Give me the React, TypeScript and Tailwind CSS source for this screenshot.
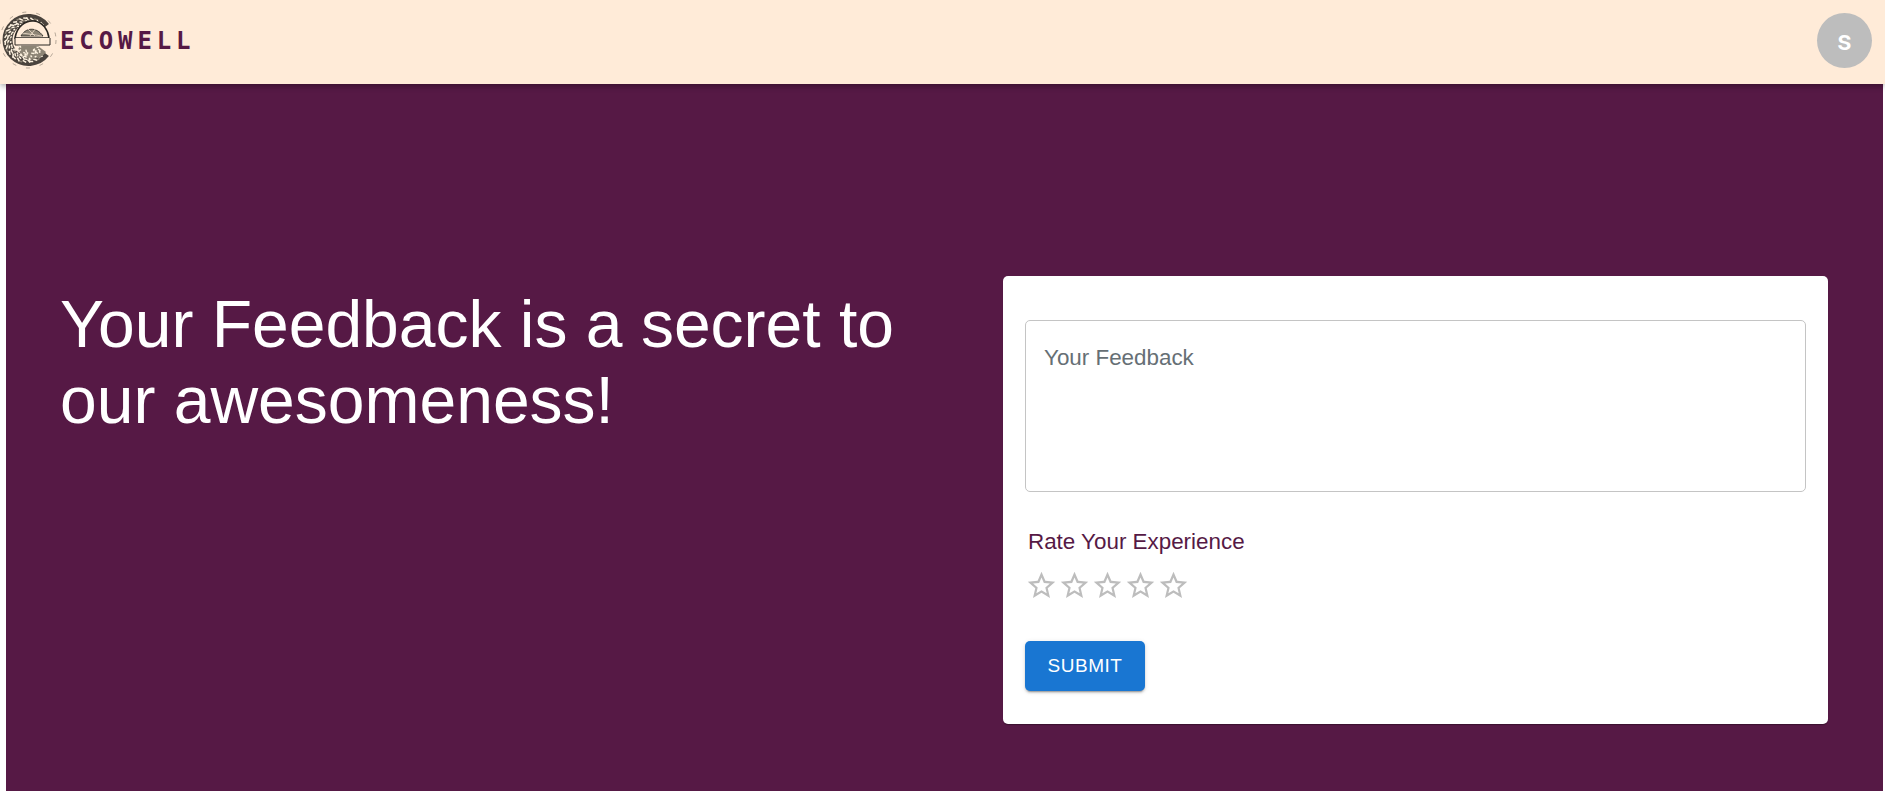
import React from 'react';

const sans = "font-['Liberation_Sans',Arial,sans-serif]";

const ink = '#2a2622';

// mosaic specks laid along the logo's strokes
const ringSpecks = Array.from({ length: 90 }, (_, i) => {
  const a = 0.7 + (i / 90) * (Math.PI * 2 - 1.4);
  const r = 17.5 + (i % 3) * 2.8;
  return { x: 27 + Math.cos(a) * r, y: 28 + Math.sin(a) * r, w: 2 + (i % 3), deg: (a * 180) / Math.PI + 90 + (i % 5) * 14 };
});

const bowlSpecks = Array.from({ length: 26 }, (_, i) => {
  const a = 0.3 + (i / 26) * 2.6;
  const r = 9 + (i % 3) * 2.5;
  return { x: 28 + Math.cos(a) * r, y: 32 + Math.sin(a) * r, w: 2 + (i % 2), deg: i * 41 };
});

function Logo() {
  return (
    <svg width="60" height="72" viewBox="0 0 60 72" className="shrink-0">
      <g transform="translate(0 7)">
        <circle cx="28" cy="28" r="28" fill="none" stroke="#6b6256" strokeWidth="0.5" strokeDasharray="4 10" />
        {/* outer ring, open on the right */}
        <path d="M45 41 A21 21 0 1 1 45 15" fill="none" stroke={ink} strokeWidth="10" opacity="0.85" />
        {ringSpecks.map((s, i) => (
          <rect key={i} x={s.x} y={s.y} width={s.w} height="1.5" fill={i % 5 === 0 ? '#8d8475' : '#fdf1df'} transform={`rotate(${s.deg} ${s.x} ${s.y})`} />
        ))}
        {/* inner e: dome on top, bar, mosaic bowl below */}
        <path d="M15 26 C17 14 26 8 34 9 C43 10 48 18 49 26 L15 26 Z" fill="#ffebd8" stroke={ink} strokeWidth="1.6" />
        <path d="M21 24 C25 16 36 14 43 24 Z" fill="#8d8475" stroke={ink} strokeWidth="0.8" />
        <path d="M22 21 L42 24 M28 17 L35 24 M36 16 L30 24" stroke="#ffebd8" strokeWidth="0.7" />
        <path d="M15 26 L15 33 L50 33 L50 26" fill="#ffebd8" stroke={ink} strokeWidth="1" />
        <path d="M18 34 C18 43 26 48 34 47 C40 46 44 43 46 40 L38 34 Z" fill="#8d8475" />
        {bowlSpecks.map((s, i) => (
          <rect key={i} x={s.x} y={s.y} width={s.w} height="1.4" fill="#fdf1df" transform={`rotate(${s.deg} ${s.x} ${s.y})`} />
        ))}
      </g>
    </svg>
  );
}

function StarOutline() {
  return (
    <svg width="33" height="33" viewBox="0 0 24 24" fill="#bdbdbd">
      <path d="M22 9.24l-7.19-.62L12 2 9.19 8.63 2 9.24l5.46 4.73L5.82 21 12 17.27 18.18 21l-1.63-7.03L22 9.24zM12 15.4l-3.76 2.27 1-4.28-3.32-2.88 4.38-.38L12 6.1l1.71 4.04 4.38.38-3.32 2.88 1 4.28L12 15.4z" />
    </svg>
  );
}

export default function App() {
  return (
    <div className={`min-h-[791px] bg-white ${sans}`}>
      <header className="relative z-10 flex h-[84px] items-center justify-between bg-[#ffebd8] pb-[3px] pr-[13px] shadow-[0_2px_4px_-1px_rgba(0,0,0,0.2),0_4px_5px_0_rgba(0,0,0,0.14)]">
        <div className="flex items-center">
          <Logo />
          <span className="font-['DejaVu_Sans_Mono',monospace] text-[24px] font-bold tracking-[4.9px] text-[#561945]">ECOWELL</span>
        </div>
        <div className="flex h-[55px] w-[55px] items-center justify-center rounded-full bg-[#bdbdbd] font-['Roboto',sans-serif] text-[28px] font-medium text-white">s</div>
      </header>

      <main className="ml-1.5 mr-0.5 flex h-[707px] items-start bg-[#561945]">
        <div className="w-[997px] pl-[54px] pt-[202px]">
          <h1 className="w-[880px] text-[66px] leading-[76px] text-white">Your Feedback is a secret to our awesomeness!</h1>
        </div>

        <section className="mt-[192px] flex h-[448px] w-[825px] flex-col rounded-[5px] bg-white pl-[22px] pr-[22px] pt-[44px] shadow-[0_2px_1px_-1px_rgba(0,0,0,0.2),0_1px_1px_0_rgba(0,0,0,0.14)]">
          <div className="h-[172px] rounded-[5px] border border-[#c4c4c4] px-[18px] pt-[23px] text-[22.4px] leading-[28px] text-[#666f75]">Your Feedback</div>
          <p className="ml-[3px] mt-[36px] text-[22.4px] leading-[28px] text-[#561945]">Rate Your Experience</p>
          <div className="mt-[13px] flex">
            {[0, 1, 2, 3, 4].map((i) => (
              <StarOutline key={i} />
            ))}
          </div>
          <button className="mt-[39px] h-[50px] w-[120px] rounded-[5px] bg-[#1976d2] text-[19px] tracking-[0.5px] text-white shadow-[0_3px_1px_-2px_rgba(0,0,0,0.2),0_2px_2px_0_rgba(0,0,0,0.14),0_1px_5px_0_rgba(0,0,0,0.12)]">SUBMIT</button>
        </section>
      </main>
    </div>
  );
}
